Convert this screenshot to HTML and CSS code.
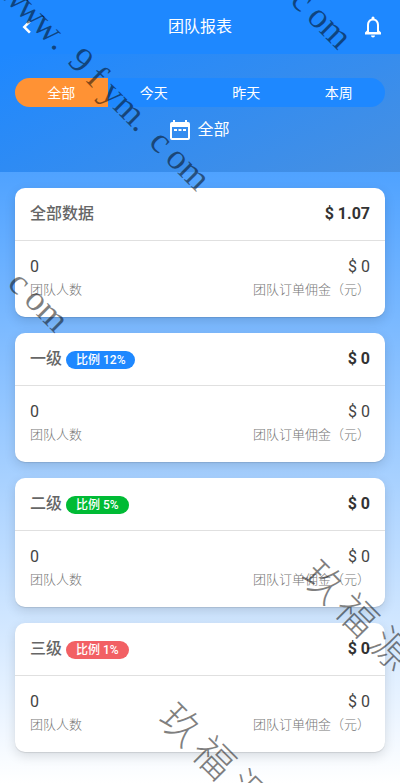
FILE: index.html
```html
<!DOCTYPE html>
<html lang="zh-CN">
<head>
<meta charset="utf-8">
<meta name="viewport" content="width=device-width, initial-scale=1">
<title>团队报表</title>
<link rel="stylesheet" href="styles.css">
</head>
<body>
<div class="page">
  <header class="topbar">
    <button class="icon-button" type="button" aria-label="返回">
      <svg width="24" height="24" viewBox="0 0 24 24" fill="currentColor"><path d="M15.800 7.200 14 5.500l-6.500 6.500 6.500 6.500 1.800-1.700L11 12z"/></svg>
    </button>
    <h1 class="title">团队报表</h1>
    <button class="icon-button" type="button" aria-label="通知">
      <svg width="24" height="24" viewBox="0 0 24 24" fill="currentColor"><path d="M10 20.500h4a2 2 0 0 1-4 0zM4 19.500v-2l2-2V10c0-3 1.600-5.500 4.500-6.200V3a1.500 1.500 0 0 1 3 0v.8C16.400 4.500 18 7 18 10v5.500l2 2v2zM8 17h8v-7c0-2.500-1.500-4.500-4-4.500S8 7.500 8 10z" fill-rule="evenodd"/></svg>
    </button>
  </header>

  <section class="filters">
    <div class="tabs">
      <button class="tab active" type="button">全部</button>
      <button class="tab" type="button">今天</button>
      <button class="tab" type="button">昨天</button>
      <button class="tab" type="button">本周</button>
    </div>
    <button class="date-picker" type="button">
      <svg width="20" height="22" viewBox="0 0 20 22" fill="currentColor"><path fill-rule="evenodd" d="M3 1h2v2h10V1h2v2h1q2 0 2 2v14q0 2-2 2H2q-2 0-2-2V5q0-2 2-2h1zM2 8v11h16V8zM4 10h3v2H4zM8.500 10h3v2h-3zM13 10h3v2h-3z"/></svg>
      全部
    </button>
  </section>

  <main class="cards">
    <article class="card">
      <div class="card-head">
        <h2 class="name">全部数据</h2>
        <strong class="total">$ 1.07</strong>
      </div>
      <div class="card-body">
        <div class="stat"><span class="value">0</span><span class="label">团队人数</span></div>
        <div class="stat end"><span class="value">$ 0</span><span class="label">团队订单佣金（元）</span></div>
      </div>
    </article>
    <article class="card">
      <div class="card-head">
        <h2 class="name">一级</h2><span class="badge blue">比例 12%</span>
        <strong class="total">$ 0</strong>
      </div>
      <div class="card-body">
        <div class="stat"><span class="value">0</span><span class="label">团队人数</span></div>
        <div class="stat end"><span class="value">$ 0</span><span class="label">团队订单佣金（元）</span></div>
      </div>
    </article>
    <article class="card">
      <div class="card-head">
        <h2 class="name">二级</h2><span class="badge green">比例 5%</span>
        <strong class="total">$ 0</strong>
      </div>
      <div class="card-body">
        <div class="stat"><span class="value">0</span><span class="label">团队人数</span></div>
        <div class="stat end"><span class="value">$ 0</span><span class="label">团队订单佣金（元）</span></div>
      </div>
    </article>
    <article class="card">
      <div class="card-head">
        <h2 class="name">三级</h2><span class="badge red">比例 1%</span>
        <strong class="total">$ 0</strong>
      </div>
      <div class="card-body">
        <div class="stat"><span class="value">0</span><span class="label">团队人数</span></div>
        <div class="stat end"><span class="value">$ 0</span><span class="label">团队订单佣金（元）</span></div>
      </div>
    </article>
  </main>

  <svg class="watermark" aria-hidden="true">
    <g transform="rotate(45)">
      <text y="-3" x="8 31 54 72 100 123 146 169 187 214 238 261">www.9fym.com</text>
      <text y="-203" x="214 238 261">com</text>
      <text y="197" x="214 238 261">com</text>
      <text class="han" y="197" x="640 687 735">玖福源</text>
      <text class="han" y="399" x="640 687 735">玖福源</text>
    </g>
  </svg>
</div>
</body>
</html>
```
FILE: styles.css
```css
* {
  box-sizing: border-box;
}

body {
  margin: 0;
  padding-right: 1px;
  background: #fff;
  font-family: Roboto, "Noto Sans CJK SC", sans-serif;
  color: #333;
}

button {
  border: 0;
  padding: 0;
  background: none;
  color: #fff;
  font: inherit;
  cursor: pointer;
}

svg {
  display: block;
}

.page {
  position: relative;
  min-height: 100vh;
  overflow: hidden;
  background: linear-gradient(#1e88ff, #fff);
}

.topbar {
  display: flex;
  align-items: center;
  justify-content: space-between;
  height: 54px;
  padding: 0 15px;
  background: #1e88ff;
  color: #fff;
}

.title {
  margin: 0;
  font-size: 16px;
  font-weight: 400;
  line-height: 24px;
}

.filters {
  display: flex;
  flex-direction: column;
  align-items: center;
  gap: 11px;
  height: 118px;
  padding: 24px 15px 0;
  background: linear-gradient(155deg, #1e88ff, #4790e2);
}

.tabs {
  display: flex;
  width: 100%;
  height: 29px;
  border-radius: 15px;
  overflow: hidden;
  background: #1e88ff;
}

.tab {
  flex: 1;
  font-size: 14px;
  line-height: 28px;
}

.tab.active {
  background: #ff9234;
}

.date-picker {
  display: flex;
  align-items: center;
  gap: 7px;
  font-size: 16px;
  line-height: 24px;
}

.cards {
  display: flex;
  flex-direction: column;
  gap: 16px;
  padding: 16px 15px 31px;
}

.card {
  border-radius: 10px;
  background: #fff;
  box-shadow: 0 4px 12px rgba(0, 0, 0, 0.12), 0 1px 1px rgba(0, 0, 0, 0.1);
}

.card-head {
  display: flex;
  align-items: center;
  gap: 4px;
  height: 53px;
  padding: 0 15px;
  border-bottom: 1px solid #e0e0e0;
}

.name {
  margin: 0;
  font-size: 16px;
  font-weight: 500;
  line-height: 24px;
  color: #666;
}

.total {
  margin-left: auto;
  font-size: 16px;
  font-weight: 700;
  line-height: 24px;
}

.badge {
  padding: 0 10px;
  border-radius: 9px;
  margin-top: 2px;
  font-size: 12px;
  font-weight: 500;
  line-height: 18px;
  color: #fff;
}

.blue {
  background: #1e88ff;
}

.green {
  background: #00bb35;
}

.red {
  background: #f26064;
}

.card-body {
  display: flex;
  justify-content: space-between;
  padding: 14px 15px 16px;
}

.stat {
  display: flex;
  flex-direction: column;
}

.end {
  align-items: flex-end;
}

.value {
  font-size: 16px;
  line-height: 24px;
  color: #444;
}

.label {
  font-size: 13px;
  line-height: 22px;
  font-weight: 300;
  color: #777;
}

.watermark {
  position: absolute;
  inset: 0;
  width: 100%;
  height: 100%;
  pointer-events: none;
  fill: rgba(0, 0, 0, 0.5);
  font-family: "Liberation Serif", serif;
  font-size: 36px;
  text-anchor: middle;
}

.han {
  font-family: "Noto Sans CJK SC", sans-serif;
  font-size: 40px;
  font-weight: 300;
}
```
